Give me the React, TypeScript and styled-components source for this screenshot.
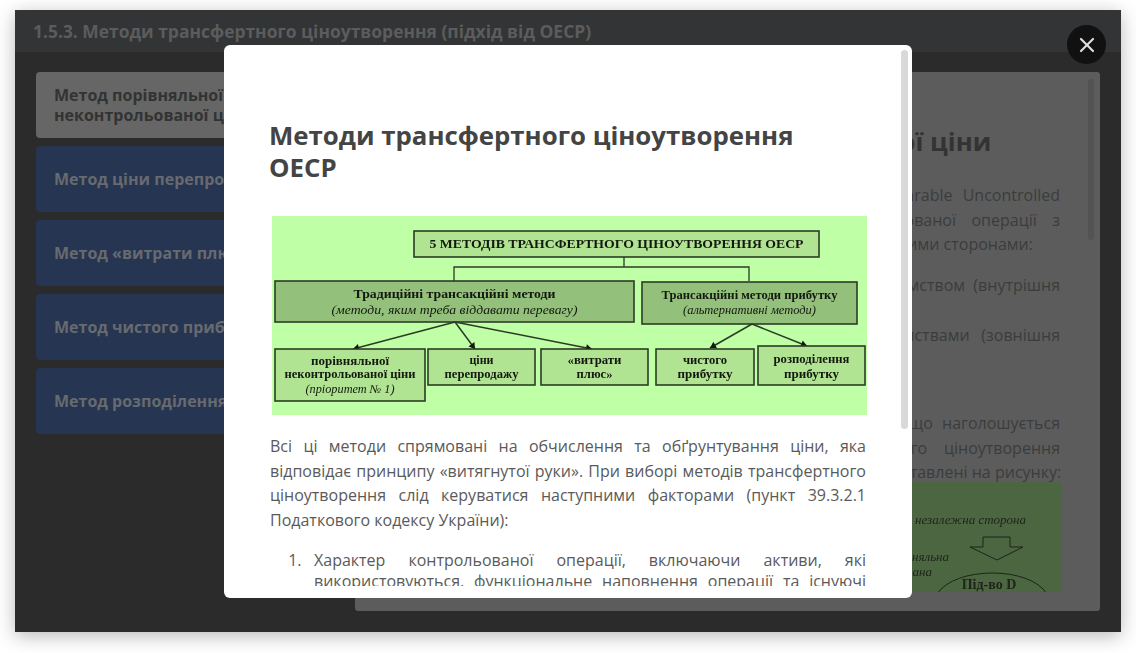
import React from "react";
import { X } from "lucide-react";
import styled, { createGlobalStyle } from "styled-components";

const GlobalStyle = createGlobalStyle`
  html, body {
    margin: 0;
    padding: 0;
    height: 100%;
    background: #fff;
    overflow: hidden;
  }
  * {
    box-sizing: border-box;
  }
`;

const fontStack = `"Open Sans", "Noto Sans", sans-serif`;
const serifStack = `"Liberation Serif", serif`;

const Page = styled.div`
  width: 1136px;
  height: 653px;
  padding: 10px 15px 21px;
  font-family: ${fontStack};
`;

const Slide = styled.section`
  position: relative;
  display: flex;
  flex-direction: column;
  height: 622px;
  background: #2a2b2a;
  box-shadow: 0 4px 18px rgba(0, 0, 0, 0.28);
`;

const SlideHeader = styled.header`
  flex: none;
  height: 42px;
  padding: 0 18px;
  background: #333435;
  color: #5b5c5d;
  font-size: 17.45px;
  font-weight: 700;
  line-height: 42px;
  white-space: nowrap;
`;

const SlideBody = styled.div`
  flex: 1;
  display: flex;
  gap: 11px;
  min-height: 0;
  padding: 20px 21px 21px;
`;

const MethodList = styled.nav`
  flex: none;
  display: flex;
  flex-direction: column;
  gap: 8px;
  width: 308px;
`;

const MethodItem = styled.div<{ $active?: boolean }>`
  display: flex;
  align-items: center;
  height: 66px;
  padding: 0 18px;
  border-radius: 4px;
  background: ${(props) => (props.$active ? "#666666" : "#263551")};
  color: ${(props) => (props.$active ? "#333333" : "#676a6f")};
  font-size: 16px;
  font-weight: 700;
  line-height: 20px;
`;

const ContentPanel = styled.article`
  position: relative;
  flex: 1;
  min-width: 0;
  padding: 0 38px 18px 40px;
  border-radius: 3px;
  background: #5c5c5c;
  color: #3b3c3c;
`;

const PanelScroll = styled.div`
  height: 100%;
  overflow: hidden;
`;

const PanelThumb = styled.div`
  position: absolute;
  top: 7px;
  right: 6px;
  width: 6px;
  height: 161px;
  border-radius: 3px;
  background: #535353;
`;

const PanelTitle = styled.h2`
  margin: 51px 0 24px;
  color: #333333;
  font-size: 25.8px;
  font-weight: 700;
  line-height: 36px;
  white-space: nowrap;
`;

const PanelText = styled.div`
  margin: 0 2px 16.5px 0;
  font-size: 16px;
  line-height: 24.5px;
`;

const PanelLine = styled.span`
  display: block;
  text-align: justify;
  text-align-last: justify;
  white-space: nowrap;
`;

const PanelLastLine = styled.span`
  display: block;
  white-space: nowrap;
`;

const PanelBullets = styled.ul`
  margin: 0 2px 38px 0;
  padding: 0 0 0 44px;
  font-size: 16px;
  line-height: 25px;
`;

const PanelFigure = styled.svg`
  display: block;
  width: 667px;
  height: 110px;
  margin-top: -19px;
  background: #4d6642;
  filter: blur(0.35px);
`;

const Modal = styled.div`
  position: absolute;
  top: 35px;
  left: 209px;
  width: 688px;
  height: 553px;
  border-radius: 6px;
  background: #fff;
  color: #5a5a5a;
`;

const ModalThumb = styled.div`
  position: absolute;
  top: 5px;
  right: 4px;
  width: 7px;
  height: 379px;
  border-radius: 4px;
  background: #d9d9d9;
`;

const ModalContent = styled.div`
  height: 541px;
  overflow: hidden;
  padding: 74px 46px 0;
`;

const ModalTitle = styled.h1`
  width: 560px;
  margin: 0 0 33px -1px;
  color: #444444;
  font-size: 25.8px;
  font-weight: 700;
  line-height: 32px;
`;

const Diagram = styled.svg`
  display: block;
  width: 595px;
  height: 199px;
  margin: 0 0 19px 2px;
  background: #bfffa5;
  filter: blur(0.35px);
`;

const ModalText = styled.p`
  margin: 0 0 18px;
  font-size: 16px;
  line-height: 24.5px;
  text-align: justify;
`;

const ModalSteps = styled.ol`
  margin: 0;
  padding: 0 0 0 44px;
  font-size: 16px;
  line-height: 20.5px;
  text-align: justify;

  li::marker {
    content: counter(list-item) ".\\00a0\\00a0\\00a0";
  }
`;

const CloseButton = styled.button`
  position: absolute;
  top: 15px;
  left: 1052px;
  display: flex;
  align-items: center;
  justify-content: center;
  width: 39px;
  height: 39px;
  padding: 0;
  border: none;
  border-radius: 50%;
  background: #111111;
  color: #dedede;
`;

const methods = [
  "Метод порівняльної неконтрольованої ціни",
  "Метод ціни перепродажу",
  "Метод «витрати плюс»",
  "Метод чистого прибутку",
  "Метод розподілення прибутку",
];

type BoxProps = {
  x: number;
  y: number;
  w: number;
  h: number;
  fill: string;
  lines: { text: string; y: number; italic?: boolean; size?: number; fit?: number }[];
};

function DiagramBox({ x, y, w, h, fill, lines }: BoxProps) {
  return (
    <g>
      <rect x={x} y={y} width={w} height={h} fill={fill} stroke="#2c3b26" strokeWidth={1.6} />
      {lines.map((line) => (
        <text
          key={line.text}
          x={x + w / 2}
          y={line.y}
          textAnchor="middle"
          fontFamily={serifStack}
          fontSize={line.size || 12}
          fontWeight={line.italic ? 400 : 700}
          fontStyle={line.italic ? "italic" : "normal"}
          fill="#14190f"
          textLength={line.fit}
          lengthAdjust={line.fit ? "spacingAndGlyphs" : undefined}
        >
          {line.text}
        </text>
      ))}
    </g>
  );
}

function Arrow({ x1, y1, x2, y2 }: { x1: number; y1: number; x2: number; y2: number }) {
  const angle = Math.atan2(y2 - y1, x2 - x1);
  const size = 7;
  const spread = 0.55;
  const ax = x2 - size * Math.cos(angle - spread);
  const ay = y2 - size * Math.sin(angle - spread);
  const bx = x2 - size * Math.cos(angle + spread);
  const by = y2 - size * Math.sin(angle + spread);
  return (
    <g>
      <line x1={x1} y1={y1} x2={x2} y2={y2} stroke="#2c3b26" strokeWidth={1.5} />
      <polygon points={`${x2},${y2} ${ax},${ay} ${bx},${by}`} fill="#14190f" />
    </g>
  );
}

function MethodsDiagram() {
  const light = "#b0e392";
  const dark = "#93c07b";
  return (
    <Diagram viewBox="0 0 595 199">
      <path d="M352 41V51M182 65V51H477V65" fill="none" stroke="#2c3b26" strokeWidth={1.3} />
      <DiagramBox
        x={142}
        y={15}
        w={405}
        h={26}
        fill={light}
        lines={[{ text: "5 МЕТОДІВ ТРАНСФЕРТНОГО ЦІНОУТВОРЕННЯ ОЕСР", y: 32, size: 13, fit: 374 }]}
      />
      <DiagramBox
        x={3}
        y={65}
        w={359}
        h={41}
        fill={dark}
        lines={[
          { text: "Традиційні трансакційні методи", y: 82, size: 12.5, fit: 202 },
          { text: "(методи, яким треба віддавати перевагу)", y: 98, italic: true, size: 12.5, fit: 246 },
        ]}
      />
      <DiagramBox
        x={370}
        y={66}
        w={215}
        h={42}
        fill={dark}
        lines={[
          { text: "Трансакційні методи прибутку", y: 83, size: 12, fit: 176 },
          { text: "(альтернативні методи)", y: 98, italic: true, size: 12, fit: 133 },
        ]}
      />
      <Arrow x1={183} y1={106} x2={81} y2={133} />
      <Arrow x1={183} y1={106} x2={203} y2={133} />
      <Arrow x1={183} y1={106} x2={320} y2={133} />
      <Arrow x1={480} y1={108} x2={438} y2={132} />
      <Arrow x1={480} y1={108} x2={535} y2={130} />
      <DiagramBox
        x={3}
        y={133}
        w={150}
        h={52}
        fill={light}
        lines={[
          { text: "порівняльної", y: 149, fit: 78 },
          { text: "неконтрольованої ціни", y: 162, fit: 131 },
          { text: "(пріоритет № 1)", y: 177, italic: true, fit: 89 },
        ]}
      />
      <DiagramBox
        x={156}
        y={133}
        w={107}
        h={36}
        fill={light}
        lines={[
          { text: "ціни", y: 148 },
          { text: "перепродажу", y: 162, fit: 74 },
        ]}
      />
      <DiagramBox
        x={269}
        y={133}
        w={107}
        h={36}
        fill={light}
        lines={[
          { text: "«витрати", y: 148, fit: 54 },
          { text: "плюс»", y: 162, fit: 36 },
        ]}
      />
      <DiagramBox
        x={384}
        y={133}
        w={98}
        h={36}
        fill={light}
        lines={[
          { text: "чистого", y: 148, fit: 44 },
          { text: "прибутку", y: 162, fit: 55 },
        ]}
      />
      <DiagramBox
        x={486}
        y={130}
        w={107}
        h={39}
        fill={light}
        lines={[
          { text: "розподілення", y: 147, fit: 76 },
          { text: "прибутку", y: 162, fit: 55 },
        ]}
      />
    </Diagram>
  );
}

function ComparableFigure() {
  return (
    <PanelFigure viewBox="0 0 667 110">
      <text
        x={631}
        y={42}
        textAnchor="end"
        fontFamily={serifStack}
        fontSize={13}
        fontStyle="italic"
        fill="#1d2419"
      >
        незалежна сторона
      </text>
      <text
        x={554}
        y={79}
        textAnchor="end"
        fontFamily={serifStack}
        fontSize={13}
        fontStyle="italic"
        fill="#1d2419"
      >
        порівняльна
      </text>
      <text
        x={537}
        y={94}
        textAnchor="end"
        fontFamily={serifStack}
        fontSize={13}
        fontStyle="italic"
        fill="#1d2419"
      >
        обрана
      </text>
      <path d="M588 55H615V65H628L602 78L575 65H588Z" fill="none" stroke="#1d2419" strokeWidth={1} />
      <path d="M542 112C560 84 635 84 652 112" fill="none" stroke="#1d2419" strokeWidth={1} />
      <text
        x={594}
        y={107}
        textAnchor="middle"
        fontFamily={serifStack}
        fontSize={14}
        fontWeight={700}
        fill="#1d2419"
      >
        Під-во D
      </text>
    </PanelFigure>
  );
}

export default function App() {
  return (
    <Page>
      <GlobalStyle />
      <Slide>
        <SlideHeader>1.5.3. Методи трансфертного ціноутворення (підхід від ОЕСР)</SlideHeader>
        <SlideBody>
          <MethodList>
            {methods.map((method, index) => (
              <MethodItem key={method} $active={index === 0}>
                {method}
              </MethodItem>
            ))}
          </MethodList>
          <ContentPanel>
            <PanelScroll>
              <PanelTitle>Метод порівняльної неконтрольованої ціни</PanelTitle>
              <PanelText>
                <PanelLine>Цей метод порівняльної неконтрольованої ціни (англ. Comparable Uncontrolled</PanelLine>
                <PanelLine>Price, CUP) передбачає пряме порівняння ціни контрольованої операції з</PanelLine>
                <PanelLastLine>ціною в порівнянних неконтрольованих операціях між незалежними сторонами:</PanelLastLine>
              </PanelText>
              <PanelBullets>
                <li>
                  <PanelLine>однієї сторони контрольованої операції з іншим підприємством (внутрішня</PanelLine>
                  <PanelLastLine>порівнянна операція);</PanelLastLine>
                </li>
                <li>
                  <PanelLine>двома іншими незалежними одне від одного підприємствами (зовнішня</PanelLine>
                  <PanelLastLine>порівнянна операція).</PanelLastLine>
                </li>
              </PanelBullets>
              <PanelText>
                <PanelLine>Пріоритетність цього методу перед всіма іншими методами, що наголошується</PanelLine>
                <PanelLine>у настановах ОЕСР з питань міжнародного трансфертного ціноутворення</PanelLine>
                <PanelLastLine>Основні варіанти застосування цього методу зіставної ціни представлені на рисунку:</PanelLastLine>
              </PanelText>
              <ComparableFigure />
            </PanelScroll>
            <PanelThumb />
          </ContentPanel>
        </SlideBody>
        <Modal>
          <ModalContent>
            <ModalTitle>Методи трансфертного ціноутворення ОЕСР</ModalTitle>
            <MethodsDiagram />
            <ModalText>
              Всі ці методи спрямовані на обчислення та обґрунтування ціни, яка відповідає принципу
              «витягнутої руки». При виборі методів трансфертного ціноутворення слід керуватися
              наступними факторами (пункт 39.3.2.1 Податкового кодексу України):
            </ModalText>
            <ModalSteps>
              <li>
                Характер контрольованої операції, включаючи активи, які використовуються,
                функціональне наповнення операції та існуючі ризики сторін цієї операції.
              </li>
            </ModalSteps>
          </ModalContent>
          <ModalThumb />
        </Modal>
        <CloseButton type="button" aria-label="Закрити">
          <X size={24} strokeWidth={2.2} />
        </CloseButton>
      </Slide>
    </Page>
  );
}
